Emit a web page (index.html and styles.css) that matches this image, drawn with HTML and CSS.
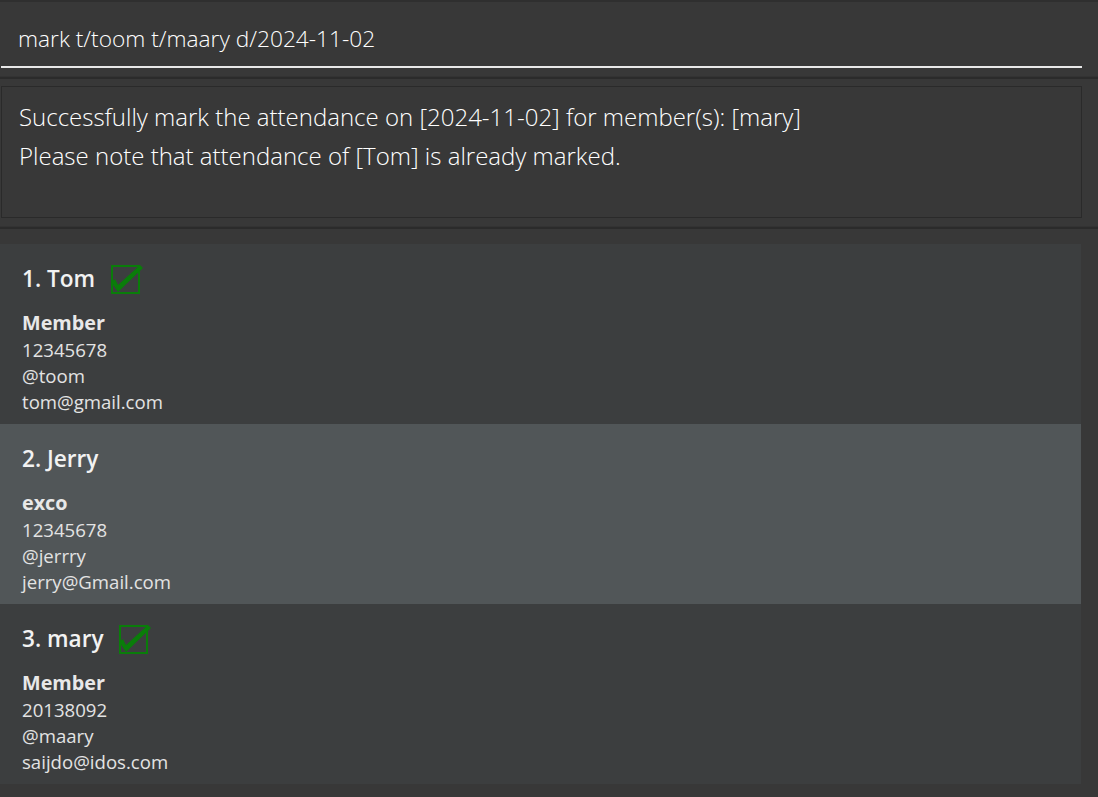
FILE: index.html
```html
<!DOCTYPE html>
<html lang="en">
<head>
<meta charset="utf-8">
<title>Address Book</title>
<link rel="stylesheet" href="styles.css">
</head>
<body>
<div class="app">
  <div class="command-pane">
    <div class="command-field">mark t/toom t/maary d/2024-11-02</div>
  </div>
  <div class="divider"></div>
  <div class="result-pane">
    <div class="result-box">
      <div class="result-line">Successfully mark the attendance on [2024-11-02] for member(s): [mary]</div>
      <div class="result-line">Please note that attendance of [Tom] is already marked.</div>
    </div>
  </div>
  <div class="divider"></div>
  <div class="list-pane">
    <div class="list">
      <div class="card">
        <div class="title-row">
          <span class="name">1. Tom</span>
          <svg class="check" width="34" height="30" viewBox="0 0 34 30">
            <rect x="1" y="2" width="27" height="27" fill="none" stroke="#0a7d0a" stroke-width="2"/>
            <path d="M0 18 L4 15 L7 21 L29 1 L32 4 L7 28 Z" fill="#0a7d0a"/>
          </svg>
        </div>
        <div class="role">Member</div>
        <div class="info">12345678</div>
        <div class="info">@toom</div>
        <div class="info">tom@gmail.com</div>
      </div>
      <div class="card card-odd">
        <div class="title-row">
          <span class="name">2. Jerry</span>
        </div>
        <div class="role">exco</div>
        <div class="info">12345678</div>
        <div class="info">@jerrry</div>
        <div class="info">jerry@Gmail.com</div>
      </div>
      <div class="card">
        <div class="title-row">
          <span class="name">3. mary</span>
          <svg class="check" width="34" height="30" viewBox="0 0 34 30">
            <rect x="1" y="2" width="27" height="27" fill="none" stroke="#0a7d0a" stroke-width="2"/>
            <path d="M0 18 L4 15 L7 21 L29 1 L32 4 L7 28 Z" fill="#0a7d0a"/>
          </svg>
        </div>
        <div class="role">Member</div>
        <div class="info">20138092</div>
        <div class="info">@maary</div>
        <div class="info">saijdo@idos.com</div>
      </div>
    </div>
  </div>
</div>
</body>
</html>
```

FILE: styles.css
```css
html, body {
  margin: 0;
  padding: 0;
}
body {
  background: #383838;
  font-family: "Open Sans", "Noto Sans", sans-serif;
  color: #f2f2f2;
  width: 1098px;
  height: 797px;
  overflow: hidden;
}
.app {
  display: flex;
  flex-direction: column;
  height: 797px;
  border-top: 2px solid #2f2f2f;
  box-sizing: border-box;
}
.command-pane {
  height: 74px;
  padding: 0 16px 0 1px;
  box-sizing: border-box;
}
.command-field {
  height: 66px;
  box-sizing: border-box;
  border-bottom: 2px solid #e8e8e8;
  padding: 22px 0 0 17px;
  font-weight: 300;
  font-size: 22.7px;
  line-height: 30px;
  color: #ffffff;
  white-space: nowrap;
}
.divider {
  height: 3px;
  background: #2b2b2b;
  border-top: 1px solid #333333;
  box-sizing: border-box;
}
.result-pane {
  height: 147px;
  padding: 7px 16px 0 1px;
  box-sizing: border-box;
}
.result-box {
  height: 132px;
  box-sizing: border-box;
  border: 1px solid #2a2a2a;
  padding: 10px 0 0 17px;
}
.result-line {
  font-weight: 300;
  font-size: 24px;
  line-height: 39px;
  color: #ffffff;
  white-space: nowrap;
}
.list-pane {
  flex: 1;
  padding: 15px 17px 0 0;
}
.list {
  display: flex;
  flex-direction: column;
}
.card {
  height: 180px;
  box-sizing: border-box;
  background: #3c3e3f;
  padding: 20px 0 0 22px;
}
.card-odd {
  background: #515658;
}
.title-row {
  display: flex;
  align-items: center;
  height: 30px;
}
.name {
  font-weight: 600;
  font-size: 22.6px;
  line-height: 30px;
  color: #f2f2f2;
}
.check {
  margin-left: 16px;
  display: block;
}
.role {
  margin-top: 15px;
  font-weight: 700;
  font-size: 19.8px;
  line-height: 28px;
  color: #e8e8e8;
}
.info {
  font-size: 18.6px;
  line-height: 26px;
  color: #e3e3e3;
}
```
